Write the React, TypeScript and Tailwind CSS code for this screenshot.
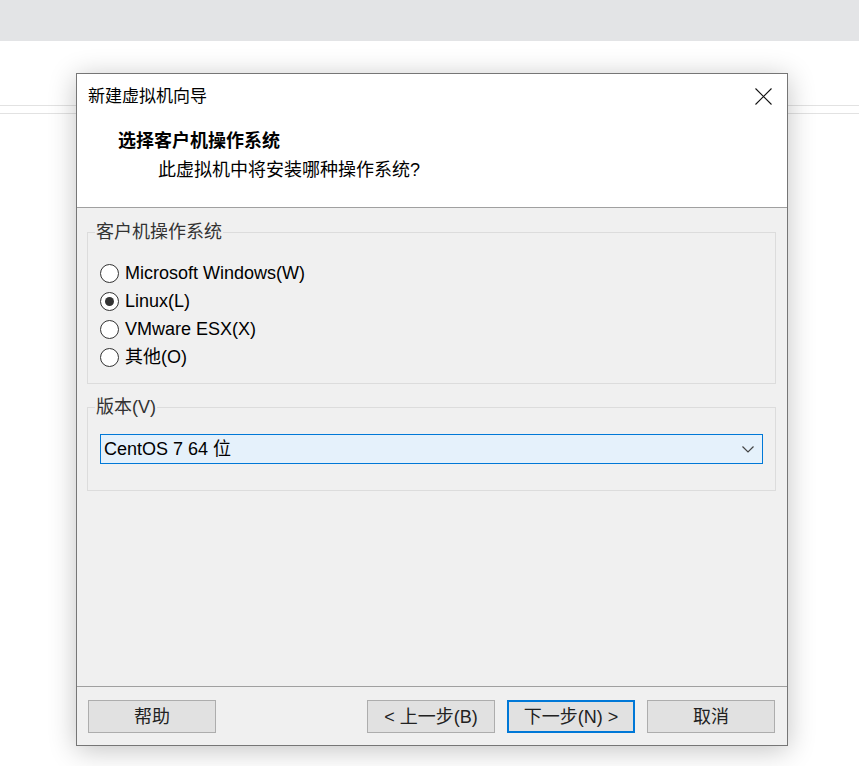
import { useState } from 'react';

const font = { fontFamily: '"Liberation Sans", "Noto Sans CJK SC", sans-serif' };

const osOptions = [
  { id: 'win', label: 'Microsoft Windows(W)' },
  { id: 'linux', label: 'Linux(L)' },
  { id: 'esx', label: 'VMware ESX(X)' },
  { id: 'other', label: '其他(O)' },
];

function Radio({ checked }: { checked: boolean }) {
  return (
    <span className="flex h-[19px] w-[19px] items-center justify-center rounded-full border border-[#333] bg-white">
      {checked && <span className="h-[9px] w-[9px] rounded-full bg-[#333]" />}
    </span>
  );
}

function Button({ label, primary }: { label: string; primary?: boolean }) {
  return (
    <button
      className={
        'h-[33px] w-[128px] bg-[#e1e1e1] text-[18px] leading-none text-[#222] ' +
        (primary ? 'border-2 border-[#0078d7]' : 'border border-[#adadad]')
      }
    >
      {label}
    </button>
  );
}

export default function App() {
  const [os, setOs] = useState('linux');

  return (
    <div className="relative h-[766px] w-full overflow-hidden bg-white" style={font}>
      {/* page behind the dialog */}
      <div className="h-[41px] bg-[#e3e4e6]" />
      <div className="mt-[64px] h-[9px] border-y border-[#e2e2e2]" />

      {/* wizard dialog */}
      <div className="absolute left-[76px] top-[73px] flex h-[673px] w-[712px] flex-col border border-[#767676] bg-[#f0f0f0] shadow-[0_4px_26px_rgba(0,0,0,0.24)]">
        {/* header */}
        <div className="h-[134px] border-b border-[#a0a0a0] bg-white">
          <div className="flex h-[44px] items-center justify-between pl-[11px] pr-[15px]">
            <span className="pt-[1px] text-[17px] text-black">新建虚拟机向导</span>
            <svg width="17" height="17" viewBox="0 0 17 17" className="mt-[1px]">
              <path d="M0.5 0.5 L16.5 16.5 M16.5 0.5 L0.5 16.5" stroke="#111" strokeWidth="1.1" fill="none" />
            </svg>
          </div>
          <div className="pl-[41px] pt-[11px]">
            <div className="text-[18px] font-bold leading-[24px] text-black">选择客户机操作系统</div>
            <div className="ml-[40px] mt-[5px] text-[18px] leading-[24px] text-black">此虚拟机中将安装哪种操作系统?</div>
          </div>
        </div>

        {/* body */}
        <div className="flex-1 pl-[10px] pr-[11px] pt-[13px]">
          <fieldset className="border border-[#dcdcdc]">
            <legend className="ml-[7px] px-[1px] text-[18px] leading-[22px] text-[#333]">客户机操作系统</legend>
            <div className="pb-[12px] pl-[12px] pt-[16px]">
              {osOptions.map((o) => (
                <label
                  key={o.id}
                  className="flex h-[28px] cursor-default items-center gap-[6px] text-[18px] text-black"
                  onClick={() => setOs(o.id)}
                >
                  <Radio checked={os === o.id} />
                  <span>{o.label}</span>
                </label>
              ))}
            </div>
          </fieldset>

          <fieldset className="mt-[12px] border border-[#dcdcdc]">
            <legend className="ml-[7px] px-[1px] text-[18px] leading-[22px] text-[#333]">版本(V)</legend>
            <div className="px-[12px] pb-[26px] pt-[16px]">
              <div className="flex h-[30px] items-center justify-between border border-[#0078d7] bg-[#e5f1fb] pl-[3px] pr-[8px]">
                <span className="text-[18px] text-black">CentOS 7 64 位</span>
                <svg width="12" height="7" viewBox="0 0 12 7">
                  <path d="M0.5 0.5 L6 6 L11.5 0.5" stroke="#444" strokeWidth="1.2" fill="none" />
                </svg>
              </div>
            </div>
          </fieldset>
        </div>

        {/* footer */}
        <div className="flex h-[59px] items-start border-t border-[#a0a0a0] pl-[11px] pr-[12px] pt-[13px]">
          <Button label="帮助" />
          <div className="ml-auto flex gap-[12px]">
            <Button label="< 上一步(B)" />
            <Button label="下一步(N) >" primary />
            <Button label="取消" />
          </div>
        </div>
      </div>
    </div>
  );
}
